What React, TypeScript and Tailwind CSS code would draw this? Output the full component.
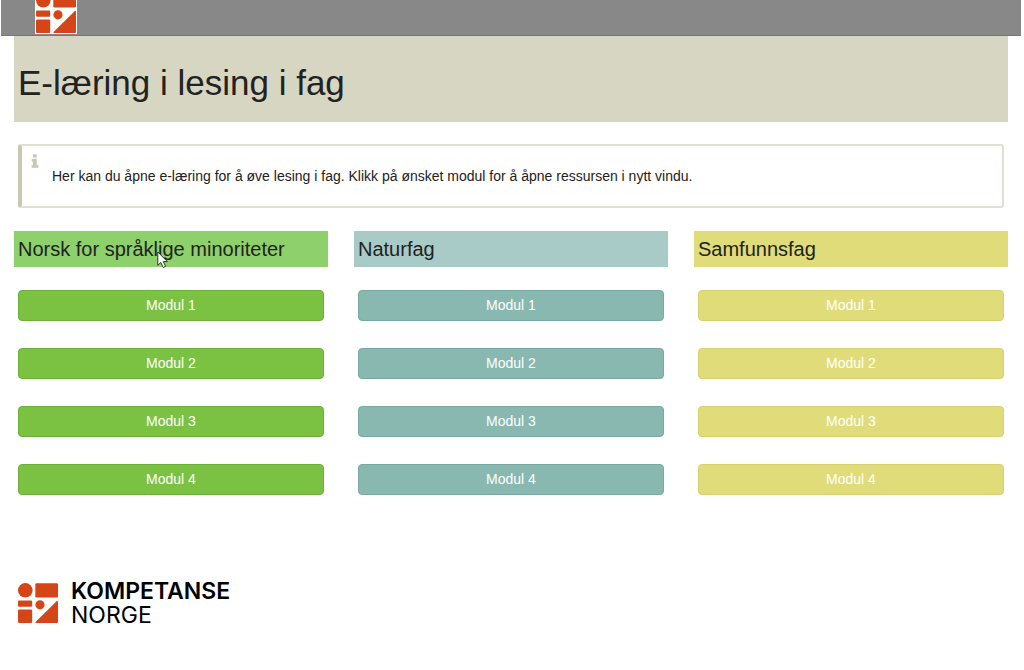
import React from 'react';

interface Subject {
  title: string;
  heading: string;
  button: string;
}

const subjects: Subject[] = [
  {
    title: 'Norsk for språklige minoriteter',
    heading: 'bg-[#8dd06c]',
    button: 'bg-[#7cc242] border-[#6bb038]',
  },
  {
    title: 'Naturfag',
    heading: 'bg-[#a8cbc7]',
    button: 'bg-[#88b8b0] border-[#77a9a0]',
  },
  {
    title: 'Samfunnsfag',
    heading: 'bg-[#e0dc7a]',
    button: 'bg-[#e0dc7a] border-[#d6d071]',
  },
];

const modules = ['Modul 1', 'Modul 2', 'Modul 3', 'Modul 4'];

const LogoMark: React.FC<{ className?: string }> = ({ className }) => (
  <svg viewBox="0 0 40 40" className={className} fill="#d64518" aria-hidden="true">
    <circle cx="7.3" cy="7.3" r="7.3" />
    <rect x="17.3" y="0.2" width="22.7" height="14.2" rx="1.2" />
    <rect x="0" y="17.5" width="14.2" height="6.2" rx="1.2" />
    <rect x="0" y="26.6" width="14.2" height="13.4" rx="1.2" />
    <circle cx="22" cy="21.8" r="4.6" />
    <path d="M38.6 18.2Q40 17 40 19V39Q40 40 39 40H19Q16.4 40 18 38.4Z" />
  </svg>
);

const InfoIcon: React.FC = () => (
  <svg viewBox="0 0 8 14" className="w-2 h-3.5 shrink-0" fill="#c8c9b0" aria-hidden="true">
    <path d="M2 0.3H5.8V3.5H2ZM0.8 4.8H5.8V11H7.4V13.7H0.6V11H2V7.4H0.8Z" />
  </svg>
);

const Pointer: React.FC = () => (
  <svg viewBox="0 0 12 18" className="absolute left-[143px] top-5 w-3 h-[18px]" aria-hidden="true">
    <path
      d="M0.8 1V14.2L3.8 11.5L6.2 16.5L8.6 15.3L6.3 10.6H10.4Z"
      fill="#fff"
      stroke="#222"
      strokeWidth="0.9"
    />
  </svg>
);

const App: React.FC = () => {
  return (
    <div className="min-h-screen bg-white text-[#222] font-['Liberation_Sans',Arial,sans-serif]">
      <header className="ml-px mr-[3px] h-9 bg-[#888] border-b border-[#777] flex items-end px-[34px] pb-px overflow-hidden">
        <a href="#" aria-label="Kompetanse Norge" className="block shrink-0 bg-white p-px">
          <LogoMark className="block size-10" />
        </a>
      </header>

      <main className="ml-[14px] mr-4">
        <div className="bg-[#d7d6c2] px-1 pt-[26px] pb-[18px]">
          <h1 className="text-[35px] leading-[42px]">E-læring i lesing i fag</h1>
        </div>

        <div className="mx-1 mt-[22px] flex min-h-16 rounded-[3px] border-2 border-l-4 border-[#dfe0d2] border-l-[#c8c9b0] pl-[9px] pt-2">
          <InfoIcon />
          <p className="ml-[13px] mt-3 text-sm">
            Her kan du åpne e-læring for å øve lesing i fag. Klikk på ønsket modul for å åpne ressursen i nytt vindu.
          </p>
        </div>

        <div className="mt-[23px] grid grid-cols-3 gap-[26px]">
          {subjects.map((subject, index) => (
            <section key={subject.title}>
              <div className={`relative px-1 py-1 ${subject.heading}`}>
                <h2 className="text-[20px] leading-7">{subject.title}</h2>
                {index === 0 && <Pointer />}
              </div>
              <div className="mt-[23px] flex flex-col gap-[27px] px-1">
                {modules.map((name) => (
                  <button
                    key={name}
                    type="button"
                    className={`h-[31px] rounded border pb-0.5 text-sm text-white ${subject.button}`}
                  >
                    {name}
                  </button>
                ))}
              </div>
            </section>
          ))}
        </div>
      </main>

      <footer className="mt-[84px] px-[18px] pb-8 flex items-center gap-[13px]">
        <LogoMark className="size-10" />
        <p className="font-[Inter,sans-serif] text-[23px] leading-6 text-black">
          <span className="block font-semibold">KOMPETANSE</span>
          <span className="block font-normal">NORGE</span>
        </p>
      </footer>
    </div>
  );
};

export default App;
